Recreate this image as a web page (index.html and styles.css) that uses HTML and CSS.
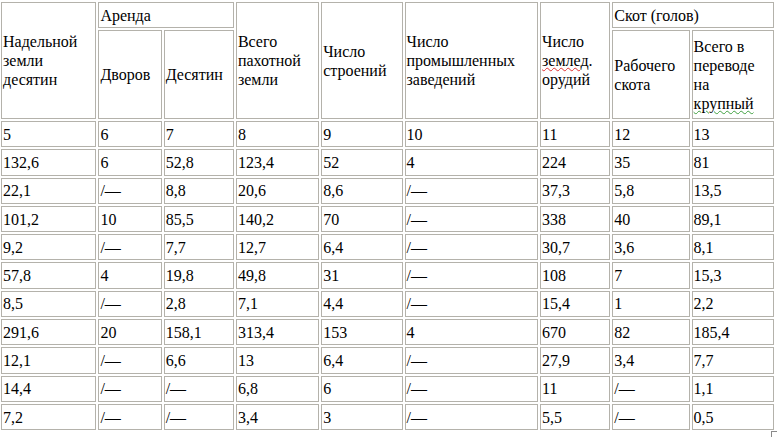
FILE: index.html
```html
<!DOCTYPE html>
<html lang="ru">
<head>
<meta charset="utf-8">
<title>Таблица</title>
<link rel="stylesheet" href="styles.css">
</head>
<body>
<table class="grid">
  <colgroup>
    <col class="c1"><col class="c2"><col class="c3"><col class="c4"><col class="c5"><col class="c6"><col class="c7"><col class="c8"><col class="c9">
  </colgroup>
  <thead>
    <tr class="h1">
      <td rowspan="2">Надельной земли десятин</td>
      <td colspan="2">Аренда</td>
      <td rowspan="2">Всего пахотной земли</td>
      <td rowspan="2">Число строений</td>
      <td rowspan="2">Число промышленных заведений</td>
      <td rowspan="2">Число <span class="sp-red">землед</span>. орудий</td>
      <td colspan="2">Скот (голов)</td>
    </tr>
    <tr class="h2">
      <td>Дворов</td>
      <td>Десятин</td>
      <td>Рабочего скота</td>
      <td>Всего в переводе на <span class="sp-green">крупный</span></td>
    </tr>
  </thead>
  <tbody>
    <tr><td>5</td><td>6</td><td>7</td><td>8</td><td>9</td><td>10</td><td>11</td><td>12</td><td>13</td></tr>
    <tr><td>132,6</td><td>6</td><td>52,8</td><td>123,4</td><td>52</td><td>4</td><td>224</td><td>35</td><td>81</td></tr>
    <tr><td>22,1</td><td>/—</td><td>8,8</td><td>20,6</td><td>8,6</td><td>/—</td><td>37,3</td><td>5,8</td><td>13,5</td></tr>
    <tr><td>101,2</td><td>10</td><td>85,5</td><td>140,2</td><td>70</td><td>/—</td><td>338</td><td>40</td><td>89,1</td></tr>
    <tr><td>9,2</td><td>/—</td><td>7,7</td><td>12,7</td><td>6,4</td><td>/—</td><td>30,7</td><td>3,6</td><td>8,1</td></tr>
    <tr><td>57,8</td><td>4</td><td>19,8</td><td>49,8</td><td>31</td><td>/—</td><td>108</td><td>7</td><td>15,3</td></tr>
    <tr><td>8,5</td><td>/—</td><td>2,8</td><td>7,1</td><td>4,4</td><td>/—</td><td>15,4</td><td>1</td><td>2,2</td></tr>
    <tr><td>291,6</td><td>20</td><td>158,1</td><td>313,4</td><td>153</td><td>4</td><td>670</td><td>82</td><td>185,4</td></tr>
    <tr><td>12,1</td><td>/—</td><td>6,6</td><td>13</td><td>6,4</td><td>/—</td><td>27,9</td><td>3,4</td><td>7,7</td></tr>
    <tr><td>14,4</td><td>/—</td><td>/—</td><td>6,8</td><td>6</td><td>/—</td><td>11</td><td>/—</td><td>1,1</td></tr>
    <tr><td>7,2</td><td>/—</td><td>/—</td><td>3,4</td><td>3</td><td>/—</td><td>5,5</td><td>/—</td><td>0,5</td></tr>
  </tbody>
</table>
<div class="corner"></div>
</body>
</html>
```

FILE: styles.css
```css
html, body {
  margin: 0;
  padding: 0;
  background: #ffffff;
}

body {
  font-family: "Liberation Serif", "Times New Roman", serif;
  font-size: 16px;
  color: #000000;
  overflow: hidden;
  position: relative;
  height: 437px;
}

.grid {
  table-layout: fixed;
  border-collapse: separate;
  border-spacing: 2px;
  margin-left: -1px;
  width: 777px;
}

.c1 { width: 95px; }
.c2 { width: 63px; }
.c3 { width: 70px; }
.c4 { width: 83px; }
.c5 { width: 81px; }
.c6 { width: 133px; }
.c7 { width: 70px; }
.c8 { width: 77px; }
.c9 { width: 82px; }

.grid td {
  box-sizing: border-box;
  border: 1px solid #b4b2ab;
  padding: 0 1px;
  font-family: "Liberation Serif", "Times New Roman", serif;
  font-size: 16px;
  line-height: 19px;
  vertical-align: middle;
  text-align: left;
  overflow: hidden;
}

.grid .h1 td {
  height: 26px;
}

.grid .h2 td {
  height: 89px;
}

.grid tbody td {
  height: 26.3px;
}

.sp-red {
  text-decoration: underline wavy #e03030;
  text-decoration-thickness: 1px;
}

.sp-green {
  text-decoration: underline wavy #40a040;
  text-decoration-thickness: 1px;
}

.corner {
  position: absolute;
  left: 771px;
  top: 431px;
  width: 10px;
  height: 10px;
  border-left: 1px solid #8a8a8a;
  border-top: 1px solid #8a8a8a;
}
```
